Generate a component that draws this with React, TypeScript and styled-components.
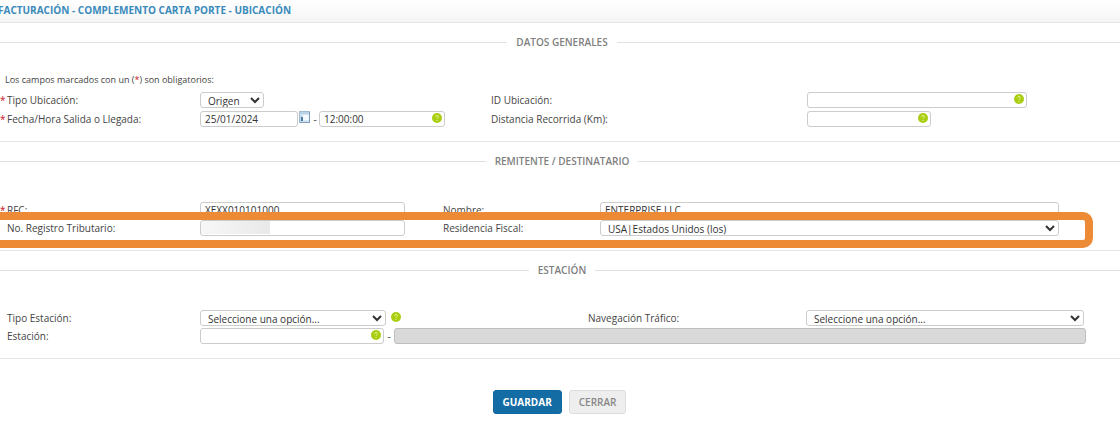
import React from "react";
import styled, { createGlobalStyle, css } from "styled-components";

const GlobalStyle = createGlobalStyle`
  *, *::before, *::after { box-sizing: border-box; }
  body {
    margin: 0;
    background: #fff;
    color: #444;
    font: 10px/16px "Open Sans", "Noto Sans", sans-serif;
    overflow-x: hidden;
  }
`;

const Page = styled.main`
  margin-right: -4px;
`;

const TitleBar = styled.header`
  height: 23px;
  border-bottom: 1px solid #e4e4e4;
  background: linear-gradient(#fff, #f5f5f5);
`;

const Title = styled.h1`
  margin: 0 0 0 -2px;
  font-size: 10px;
  line-height: 20px;
  font-weight: 700;
  color: #3a8abb;
  white-space: nowrap;
`;

const Section = styled.section`
  border-bottom: 1px solid #e4e4e4;
  padding: 10px 0 14px;
`;

const SectionTitle = styled.h2`
  display: flex;
  align-items: center;
  gap: 9px;
  margin: 0;
  font-size: 10px;
  line-height: 18px;
  font-weight: 600;
  color: #808080;

  &::before,
  &::after {
    content: "";
    flex: 1;
    height: 1px;
    background: #e0e0e0;
  }
`;

const Note = styled.p`
  margin: 0;
  padding: 21px 0 4px 5px;
  font-size: 9px;
  line-height: 16px;
`;

const Required = styled.span`
  color: #c8141e;
`;

const Rows = styled.div<{ $columns: string; $gap: number; $top: number }>`
  display: grid;
  row-gap: ${(p) => p.$gap}px;
  padding-top: ${(p) => p.$top}px;
  --columns: ${(p) => p.$columns};
`;

const Row = styled.div`
  position: relative;
  display: grid;
  grid-template-columns: var(--columns);
  height: 16px;
`;

const Label = styled.label`
  display: flex;
  white-space: nowrap;
`;

const Marker = styled(Required)`
  width: 7px;
`;

const Cell = styled.div<{ $span?: number; $end?: number }>`
  display: flex;
  grid-column: span ${(p) => p.$span ?? 1};
  padding-right: ${(p) => p.$end ?? 0}px;
  min-width: 0;
`;

const control = css`
  display: block;
  width: 100%;
  height: 16px;
  margin: 0;
  border: 1px solid #ccc;
  border-radius: 3px;
  background: #fff;
  color: #333;
  font: inherit;
  line-height: 14px;
`;

const Input = styled.input`
  ${control}
  padding: 0 4px;

  &:disabled {
    background: #d9d9d9;
    border-color: #bdbdbd;
  }
`;

const RedactedInput = styled(Input)`
  background: linear-gradient(90deg, #f7f7f7, #e9e9e9) no-repeat 0 0 / 69px 13px;
`;

const Select = styled.select`
  ${control}
  padding: 0 3px;
`;

const Field = styled.div<{ $width?: number }>`
  position: relative;
  flex: ${(p) => (p.$width ? `0 0 ${p.$width}px` : "1")};
  height: 16px;
`;

const HelpButton = styled.button<{ $inside?: boolean }>`
  width: 10px;
  height: 10px;
  padding: 0;
  border: 0;
  background: none;
  ${(p) =>
    p.$inside
      ? css`
          position: absolute;
          top: 2px;
          right: 3px;
        `
      : css`
          margin: 2px 0 0 5px;
        `}

  svg { display: block; }
`;

const CalendarButton = styled.button`
  width: 12px;
  height: 12px;
  margin-left: 1px;
  padding: 0;
  border: 0;
  background: none;

  svg { display: block; }
`;

const Dash = styled.span<{ $width: number }>`
  flex: 0 0 ${(p) => p.$width}px;
  text-align: center;
`;

const Highlight = styled.div`
  position: absolute;
  top: -8px;
  bottom: -12px;
  left: -12px;
  right: 31px;
  border: 8px solid #ec8a35;
  border-radius: 10px;
  pointer-events: none;
`;

const Actions = styled.footer`
  display: flex;
  justify-content: center;
  gap: 7px;
  padding: 31px 5px 9px 0;
`;

const Button = styled.button<{ $primary?: boolean }>`
  height: 24px;
  padding: 0 9px;
  border: 1px solid ${(p) => (p.$primary ? "#1268a0" : "#ddd")};
  border-radius: 3px;
  background: ${(p) => (p.$primary ? "#146ca4" : "#eee")};
  color: ${(p) => (p.$primary ? "#fff" : "#888")};
  font: inherit;
  font-weight: ${(p) => (p.$primary ? 700 : 600)};
`;

function Help({ inside }: { inside?: boolean }) {
  return (
    <HelpButton type="button" aria-label="Ayuda" $inside={inside}>
      <svg width="10" height="10" viewBox="0 0 10 10">
        <circle cx="5" cy="5" r="5" fill="#a9cd12" />
        <path
          d="M3.5 3.8C3.5 2.1 6.5 2.1 6.5 3.8C6.5 4.8 5 4.8 5 6M5 7V8"
          fill="none"
          stroke="#e6f58a"
          strokeWidth="1"
        />
      </svg>
    </HelpButton>
  );
}

function Calendar() {
  return (
    <CalendarButton type="button" aria-label="Elegir fecha">
      <svg width="12" height="12" viewBox="0 0 12 12">
        <rect x="0.5" y="0.5" width="10" height="11" fill="#d5e5f1" stroke="#9fb9cf" />
        <path d="M1 1h9v2H1z" fill="#b9d3e8" />
        <path d="M4 4h6v5H4z" fill="#f4f9fd" />
        <path d="M1 4h2v7H1z" fill="#c2d9eb" />
        <path d="M2 6h2v4H2z" fill="#4f7ca6" />
        <path d="M10.5 1v10.5H1" fill="none" stroke="#7e9cb8" />
      </svg>
    </CalendarButton>
  );
}

function FieldLabel({
  htmlFor,
  required,
  inset,
  children,
}: {
  htmlFor: string;
  required?: boolean;
  inset?: boolean;
  children: React.ReactNode;
}) {
  return (
    <Label htmlFor={htmlFor}>
      {inset && <Marker>{required ? "*" : ""}</Marker>}
      {children}
    </Label>
  );
}

export default function App() {
  return (
    <>
      <GlobalStyle />
      <Page>
        <TitleBar>
          <Title>FACTURACIÓN - COMPLEMENTO CARTA PORTE - UBICACIÓN</Title>
        </TitleBar>

        <Section>
          <SectionTitle>DATOS GENERALES</SectionTitle>
          <Note>
            Los campos marcados con un (<Required>*</Required>) son obligatorios:
          </Note>
          <Rows $columns="200fr 291fr 316fr 317fr" $gap={3} $top={0}>
            <Row>
              <FieldLabel htmlFor="tipo" inset required>Tipo Ubicación:</FieldLabel>
              <Cell>
                <Field $width={64}>
                  <Select id="tipo">
                    <option>Origen</option>
                    <option>Destino</option>
                  </Select>
                </Field>
              </Cell>
              <FieldLabel htmlFor="id-ubicacion">ID Ubicación:</FieldLabel>
              <Cell>
                <Field $width={220}>
                  <Input id="id-ubicacion" />
                  <Help inside />
                </Field>
              </Cell>
            </Row>
            <Row>
              <FieldLabel htmlFor="fecha" inset required>Fecha/Hora Salida o Llegada:</FieldLabel>
              <Cell>
                <Field $width={98}>
                  <Input id="fecha" defaultValue="25/01/2024" />
                </Field>
                <Calendar />
                <Dash $width={8}>-</Dash>
                <Field $width={126}>
                  <Input aria-label="Hora" defaultValue="12:00:00" />
                  <Help inside />
                </Field>
              </Cell>
              <FieldLabel htmlFor="distancia">Distancia Recorrida (Km):</FieldLabel>
              <Cell>
                <Field $width={124}>
                  <Input id="distancia" />
                  <Help inside />
                </Field>
              </Cell>
            </Row>
          </Rows>
        </Section>

        <Section>
          <SectionTitle>REMITENTE / DESTINATARIO</SectionTitle>
          <Rows $columns="200fr 243fr 157fr 524fr" $gap={2} $top={32}>
            <Row>
              <FieldLabel htmlFor="rfc" inset required>RFC:</FieldLabel>
              <Cell $end={38}>
                <Field>
                  <Input id="rfc" defaultValue="XEXX010101000" />
                </Field>
              </Cell>
              <FieldLabel htmlFor="nombre">Nombre:</FieldLabel>
              <Cell $end={65}>
                <Field>
                  <Input id="nombre" defaultValue="ENTERPRISE LLC" />
                </Field>
              </Cell>
            </Row>
            <Row>
              <FieldLabel htmlFor="registro" inset>No. Registro Tributario:</FieldLabel>
              <Cell $end={38}>
                <Field>
                  <RedactedInput id="registro" />
                </Field>
              </Cell>
              <FieldLabel htmlFor="residencia">Residencia Fiscal:</FieldLabel>
              <Cell $end={65}>
                <Field>
                  <Select id="residencia">
                    <option>USA|Estados Unidos (los)</option>
                  </Select>
                </Field>
              </Cell>
              <Highlight />
            </Row>
          </Rows>
        </Section>

        <Section>
          <SectionTitle>ESTACIÓN</SectionTitle>
          <Rows $columns="200fr 388fr 218fr 318fr" $gap={2} $top={31}>
            <Row>
              <FieldLabel htmlFor="tipo-estacion" inset>Tipo Estación:</FieldLabel>
              <Cell>
                <Field $width={186}>
                  <Select id="tipo-estacion">
                    <option>Seleccione una opción...</option>
                  </Select>
                </Field>
                <Help />
              </Cell>
              <FieldLabel htmlFor="trafico">Navegación Tráfico:</FieldLabel>
              <Cell $end={40}>
                <Field>
                  <Select id="trafico">
                    <option>Seleccione una opción...</option>
                  </Select>
                </Field>
              </Cell>
            </Row>
            <Row>
              <FieldLabel htmlFor="estacion" inset>Estación:</FieldLabel>
              <Cell $span={3} $end={38}>
                <Field $width={184}>
                  <Input id="estacion" />
                  <Help inside />
                </Field>
                <Dash $width={10}>-</Dash>
                <Field>
                  <Input aria-label="Nombre de la estación" disabled />
                </Field>
              </Cell>
            </Row>
          </Rows>
        </Section>

        <Actions>
          <Button type="button" $primary>GUARDAR</Button>
          <Button type="button">CERRAR</Button>
        </Actions>
      </Page>
    </>
  );
}
